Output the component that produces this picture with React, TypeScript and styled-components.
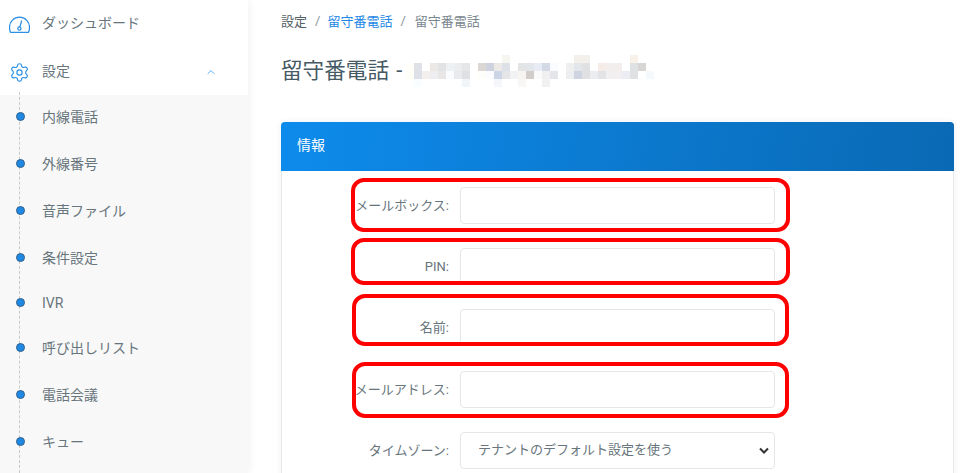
import React from "react";
import styled, { createGlobalStyle } from "styled-components";
import { Settings, ChevronUp } from "lucide-react";

const Global = createGlobalStyle`
  html, body { margin: 0; padding: 0; height: 473px; overflow: hidden; background: #fff; }
  body { font-family: Roboto, "Noto Sans CJK JP", sans-serif; color: #67757c; }
  * { box-sizing: border-box; }
`;

const Shell = styled.div`
  display: flex;
  width: 969px;
  height: 473px;
  overflow: hidden;
`;

const Sidebar = styled.aside`
  flex: 0 0 248px;
  background: #fff;
  box-shadow: 1px 0 9px rgba(0, 0, 0, 0.06);
  display: flex;
  flex-direction: column;
`;

const TopItem = styled.div<{ $h: number; $pb: number }>`
  display: flex;
  align-items: center;
  height: ${(p) => p.$h}px;
  padding: 0 0 ${(p) => p.$pb}px 9px;
  font-size: 14px;
  color: #67757c;
  flex: none;
`;

const IconSlot = styled.span<{ $drop: number }>`
  display: flex;
  width: 33px;
  flex: none;
  margin-top: ${(p) => p.$drop}px;
  color: #2b90e6;
`;

const Caret = styled.span`
  display: flex;
  margin: 4px 0 0 135px;
  color: #46a3ee;
`;

const SubList = styled.ul`
  list-style: none;
  margin: 0;
  padding: 0;
  flex: 1;
  background: #f8f8f8;
  position: relative;
  &::before {
    content: "";
    position: absolute;
    left: 19px;
    top: -3px;
    bottom: 0;
    border-left: 1px dashed #c9c9c9;
  }
`;

const SubItem = styled.li<{ $latin: boolean }>`
  position: relative;
  height: ${(p) => (p.$latin ? 43 : 46.9)}px;
  padding: 0 0 ${(p) => (p.$latin ? 2 : 4)}px 42px;
  display: flex;
  align-items: center;
  font-size: 14px;
  color: #67757c;
  &::before {
    content: "";
    position: absolute;
    left: 16px;
    top: calc(50% - 6px);
    width: 7px;
    height: 7px;
    border-radius: 50%;
    background: #1e88e5;
    border: 1px solid #35618a;
  }
`;

const Main = styled.main`
  flex: 1;
  padding: 0 15px 0 33px;
  min-width: 0;
`;

const Breadcrumb = styled.nav`
  display: flex;
  align-items: center;
  height: 40px;
  font-size: 13px;
  color: #6c757d;
`;

const Crumb = styled.span<{ $tone: "plain" | "link" | "active" }>`
  color: ${(p) => (p.$tone === "link" ? "#1e88e5" : p.$tone === "plain" ? "#555f66" : "#78868e")};
`;

const Sep = styled.span<{ $l: number; $r: number }>`
  margin: 0 ${(p) => p.$r}px 0 ${(p) => p.$l}px;
  color: #8a949b;
`;

const TitleRow = styled.div`
  display: flex;
  align-items: center;
  height: 62px;
`;

const Title = styled.h1`
  margin: 0;
  font-size: 21.6px;
  font-weight: 400;
  color: #455a64;
  line-height: 1;
  word-spacing: 2px;
`;

const Mosaic = styled.svg`
  display: block;
  margin-left: 4px;
  flex: none;
`;

const Card = styled.section`
  margin-top: 20px;
  border-radius: 4px 4px 0 0;
  box-shadow: 0 0 6px rgba(0, 40, 100, 0.07);
  background: #fff;
  border: 1px solid #e6e8ea;
  border-bottom: 0;
  height: 360px;
`;

const CardHeader = styled.header`
  height: 49px;
  margin: -1px -1px 0;
  border-radius: 4px 4px 0 0;
  background: linear-gradient(100deg, #0d8bec 0%, #0a69b4 100%);
  color: #fff;
  font-size: 14px;
  font-weight: 400;
  display: flex;
  align-items: center;
  padding: 0 0 5px 16px;
`;

const Form = styled.form`
  padding-top: 16px;
  display: flex;
  flex-direction: column;
  gap: 24.2px;
`;

const Row = styled.div`
  position: relative;
  display: flex;
  align-items: center;
  height: 37px;
`;

const Label = styled.label<{ $latin?: boolean }>`
  width: 167px;
  flex: none;
  padding-bottom: ${(p) => (p.$latin ? 0 : 2)}px;
  text-align: right;
  font-size: 13px;
  color: #67757c;
  white-space: nowrap;
`;

const TextInput = styled.input`
  margin-left: 11px;
  width: 315px;
  height: 37px;
  border: 1px solid #e4e6e8;
  border-radius: 4px;
  background: #fff;
  outline: none;
`;

const chevron =
  "data:image/svg+xml,%3Csvg xmlns='http://www.w3.org/2000/svg' width='12' height='8' viewBox='0 0 12 8'%3E%3Cpath d='M2 1.5 L6 5.5 L10 1.5' fill='none' stroke='%23333' stroke-width='2'/%3E%3C/svg%3E";

const Select = styled.select`
  margin-left: 11px;
  width: 315px;
  height: 37px;
  border: 1px solid #e4e6e8;
  border-radius: 4px;
  appearance: none;
  background: #fff url("${chevron}") no-repeat right 4px top 14px;
  padding: 0 0 2px 17px;
  font: inherit;
  font-size: 13px;
  color: #67757c;
`;

const Highlight = styled.span<{ $left: number; $top: number; $w: number; $h: number }>`
  position: absolute;
  left: ${(p) => p.$left}px;
  top: ${(p) => p.$top}px;
  width: ${(p) => p.$w}px;
  height: ${(p) => p.$h}px;
  border: 4px solid #ff0000;
  border-radius: 13px;
  pointer-events: none;
`;

const Gauge = () => (
  <svg width="21" height="18" viewBox="0 0 21 18" fill="none" stroke="currentColor" strokeWidth="1.25" strokeLinecap="round">
    <path d="M1.6 16.4 C0.4 14.6 .5 12.8 .5 11.2 A10 10 0 0 1 20.5 11.2 C20.5 12.8 20.6 14.6 19.4 16.4 H1.6 Z" />
    <circle cx="10.4" cy="12.4" r="1.6" />
    <path d="M10.9 10.8 L12.6 5" />
  </svg>
);

const subItems = ["内線電話", "外線番号", "音声ファイル", "条件設定", "IVR", "呼び出しリスト", "電話会議", "キュー"];

// Mosaic cells of the redacted name: [column, row, colour], 8px each
const cells: [number, number, string][] = [
  [12, 0, "#f7f5f0"], [21, 0, "#f3efea"], [22, 0, "#f3efea"], [28, 0, "#f7f1ea"],
  [0, 1, "#fffef8"], [1, 1, "#dfe1e6"], [3, 1, "#ece8e6"], [4, 1, "#e2e3e4"], [5, 1, "#eef1f3"], [6, 1, "#ebedef"],
  [7, 1, "#e5e6e8"], [9, 1, "#dcd6d4"], [10, 1, "#cdd2de"], [11, 1, "#ece9e6"], [12, 1, "#dde1e8"], [14, 1, "#e3e4e6"],
  [15, 1, "#e2e5e9"], [16, 1, "#e9ecf4"], [17, 1, "#d4d9e6"], [18, 1, "#fafbff"], [20, 1, "#efefef"], [21, 1, "#e3e6ea"],
  [22, 1, "#e0e1e3"], [24, 1, "#f5ece7"], [25, 1, "#f2eeee"], [26, 1, "#f3eeec"], [28, 1, "#dfe2e3"], [29, 1, "#d8d6d5"],
  [0, 2, "#fffff8"], [1, 2, "#dde0e8"], [2, 2, "#f3efed"], [3, 2, "#eeeef1"], [4, 2, "#e9e7e6"], [5, 2, "#f9fbfe"],
  [6, 2, "#e8eaee"], [7, 2, "#dfe0e4"], [9, 2, "#fdfdfa"], [10, 2, "#fbfcff"], [11, 2, "#ccd5e6"], [12, 2, "#e5e5e7"],
  [13, 2, "#f0f2f4"], [14, 2, "#f7f5f2"], [15, 2, "#d2cccb"], [16, 2, "#fafafa"], [17, 2, "#f0f0f1"], [18, 2, "#e3e5ea"],
  [20, 2, "#eceef0"], [21, 2, "#ced4e1"], [22, 2, "#e0e0e3"], [23, 2, "#ebecf0"], [24, 2, "#e3e3e6"], [25, 2, "#f1eff0"],
  [26, 2, "#f2eff0"], [27, 2, "#ecedf2"], [28, 2, "#dfe1e3"], [30, 2, "#f5f9fd"],
  [1, 3, "#fafdff"], [7, 3, "#f1f5f9"], [11, 3, "#f5f6f9"], [14, 3, "#f9f7f5"], [17, 3, "#f1f1f2"],
];

export default function App() {
  return (
    <>
      <Global />
      <Shell>
        <Sidebar>
          <TopItem $h={47} $pb={4}>
            <IconSlot $drop={7}><Gauge /></IconSlot>
            ダッシュボード
          </TopItem>
          <TopItem $h={48} $pb={2}>
            <IconSlot $drop={4}><Settings size={21} strokeWidth={1.3} /></IconSlot>
            設定
            <Caret><ChevronUp size={12} strokeWidth={1.8} /></Caret>
          </TopItem>
          <SubList>
            {subItems.map((s) => (
              <SubItem key={s} $latin={s === "IVR"}>{s}</SubItem>
            ))}
          </SubList>
        </Sidebar>
        <Main>
          <Breadcrumb>
            <Crumb $tone="plain">設定</Crumb>
            <Sep $l={8} $r={7}>/</Sep>
            <Crumb $tone="link">留守番電話</Crumb>
            <Sep $l={8} $r={9}>/</Sep>
            <Crumb $tone="active">留守番電話</Crumb>
          </Breadcrumb>
          <TitleRow>
            <Title>留守番電話 -</Title>
            <Mosaic width="248" height="32" viewBox="0 0 248 32" shapeRendering="crispEdges">
              {cells.map(([c, r, fill]) => (
                <rect key={`${c}-${r}`} x={c * 8} y={r * 8} width="8" height="8" fill={fill} />
              ))}
            </Mosaic>
          </TitleRow>
          <Card>
            <CardHeader>情報</CardHeader>
            <Form>
              <Row>
                <Label>メールボックス:</Label>
                <TextInput />
                <Highlight $left={69} $top={-9} $w={439} $h={54} />
              </Row>
              <Row>
                <Label $latin>PIN:</Label>
                <TextInput />
                <Highlight $left={69} $top={-10} $w={439} $h={47} />
              </Row>
              <Row>
                <Label>名前:</Label>
                <TextInput />
                <Highlight $left={70} $top={-15} $w={437} $h={52} />
              </Row>
              <Row>
                <Label>メールアドレス:</Label>
                <TextInput />
                <Highlight $left={70} $top={-9} $w={437} $h={56} />
              </Row>
              <Row>
                <Label>タイムゾーン:</Label>
                <Select defaultValue="default">
                  <option value="default">テナントのデフォルト設定を使う</option>
                </Select>
              </Row>
            </Form>
          </Card>
        </Main>
      </Shell>
    </>
  );
}
